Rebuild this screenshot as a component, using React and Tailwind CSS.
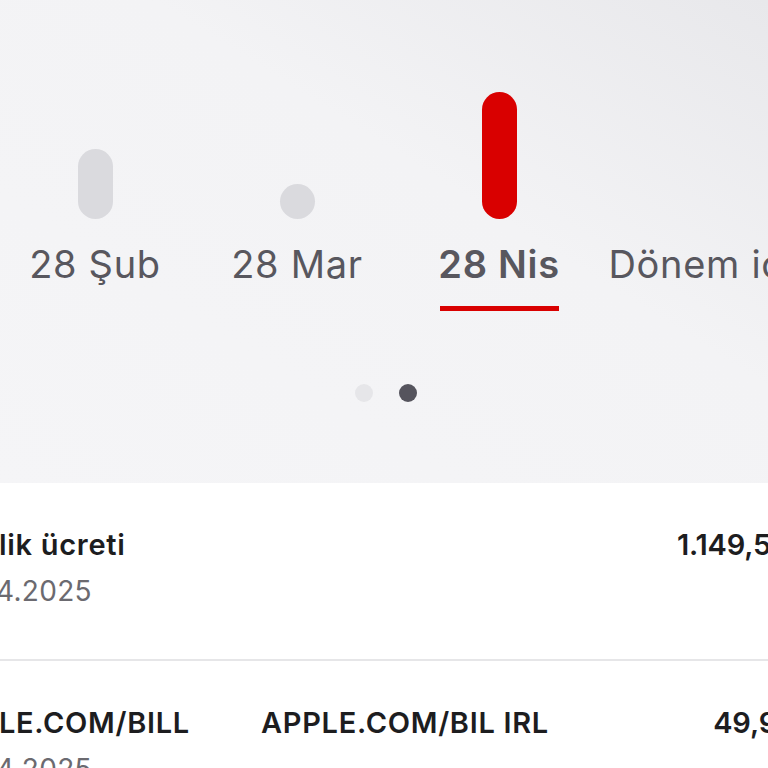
import React from "react";

const periods = [
  { label: "28 Şub", h: 70, active: false },
  { label: "28 Mar", h: 35, active: false },
  { label: "28 Nis", h: 127, active: true },
  { label: "Dönem içi", h: 0, active: false },
];

const rows = [
  { title: "lik ücreti", mid: "", date: "4.2025", amount: "1.149,5", amountCls: "-mr-[3px]" },
  { title: "LE.COM/BILL", mid: "APPLE.COM/BIL IRL", date: "4.2025", amount: "49,9", amountCls: "-mr-[9px]" },
];

export default function App() {
  return (
    <div
      className="w-[768px] h-[768px] overflow-hidden bg-white"
      style={{ fontFamily: "Inter, 'Noto Sans', sans-serif" }}
    >
      {/* chart */}
      <div className="h-[483px] bg-linear-to-bl from-[#e8e8eb] via-[#f3f3f5] via-40% to-[#f5f5f7] overflow-hidden">
        <div className="flex -ml-[6px] pt-[92px]">
          {periods.map((p) => (
            <div key={p.label} className="w-[202px] shrink-0 flex flex-col items-center">
              <div className="h-[127px] flex items-end">
                {p.h > 0 && (
                  <div
                    className={
                      "w-[35px] rounded-full " +
                      (p.active ? "bg-[#d90000]" : "bg-[#dadade]")
                    }
                    style={{ height: p.h }}
                  />
                )}
              </div>
              <div
                className={
                  "mt-[21px] text-[38px] leading-[48px] tracking-[0.7px] whitespace-nowrap text-[#58575e] " +
                  (p.active ? "font-semibold" : "font-normal")
                }
              >
                {p.label}
              </div>
              <div
                className={
                  "mt-[18px] h-[5px] w-[119px] " + (p.active ? "bg-[#d90000]" : "bg-transparent")
                }
              />
            </div>
          ))}
        </div>
        <div className="flex justify-center gap-[26px] mt-[73px] pl-[4px]">
          <div className="w-[18px] h-[18px] rounded-full bg-[#e6e6e9]" />
          <div className="w-[18px] h-[18px] rounded-full bg-[#55545d]" />
        </div>
      </div>

      {/* list */}
      <div>
        {rows.map((r, i) => (
          <div
            key={i}
            className={"pt-[44px] pb-[50px] " + (i === 0 ? "border-b-2 border-[#e6e6e8]" : "")}
          >
            <div className="flex items-baseline text-[29px] leading-[36px] font-semibold text-[#1d1d1f] whitespace-nowrap">
              <div className="w-[262px] shrink-0 -ml-[1px] tracking-[0.7px]">{r.title}</div>
              <div className="flex-1 tracking-[0.7px]">{r.mid}</div>
              <div className={"tracking-[-0.2px] " + r.amountCls}>{r.amount}</div>
            </div>
            <div className="mt-[10px] -ml-[4px] text-[28px] leading-[36px] tracking-[0.3px] text-[#6b6a70]">
              {r.date}
            </div>
          </div>
        ))}
      </div>
    </div>
  );
}
